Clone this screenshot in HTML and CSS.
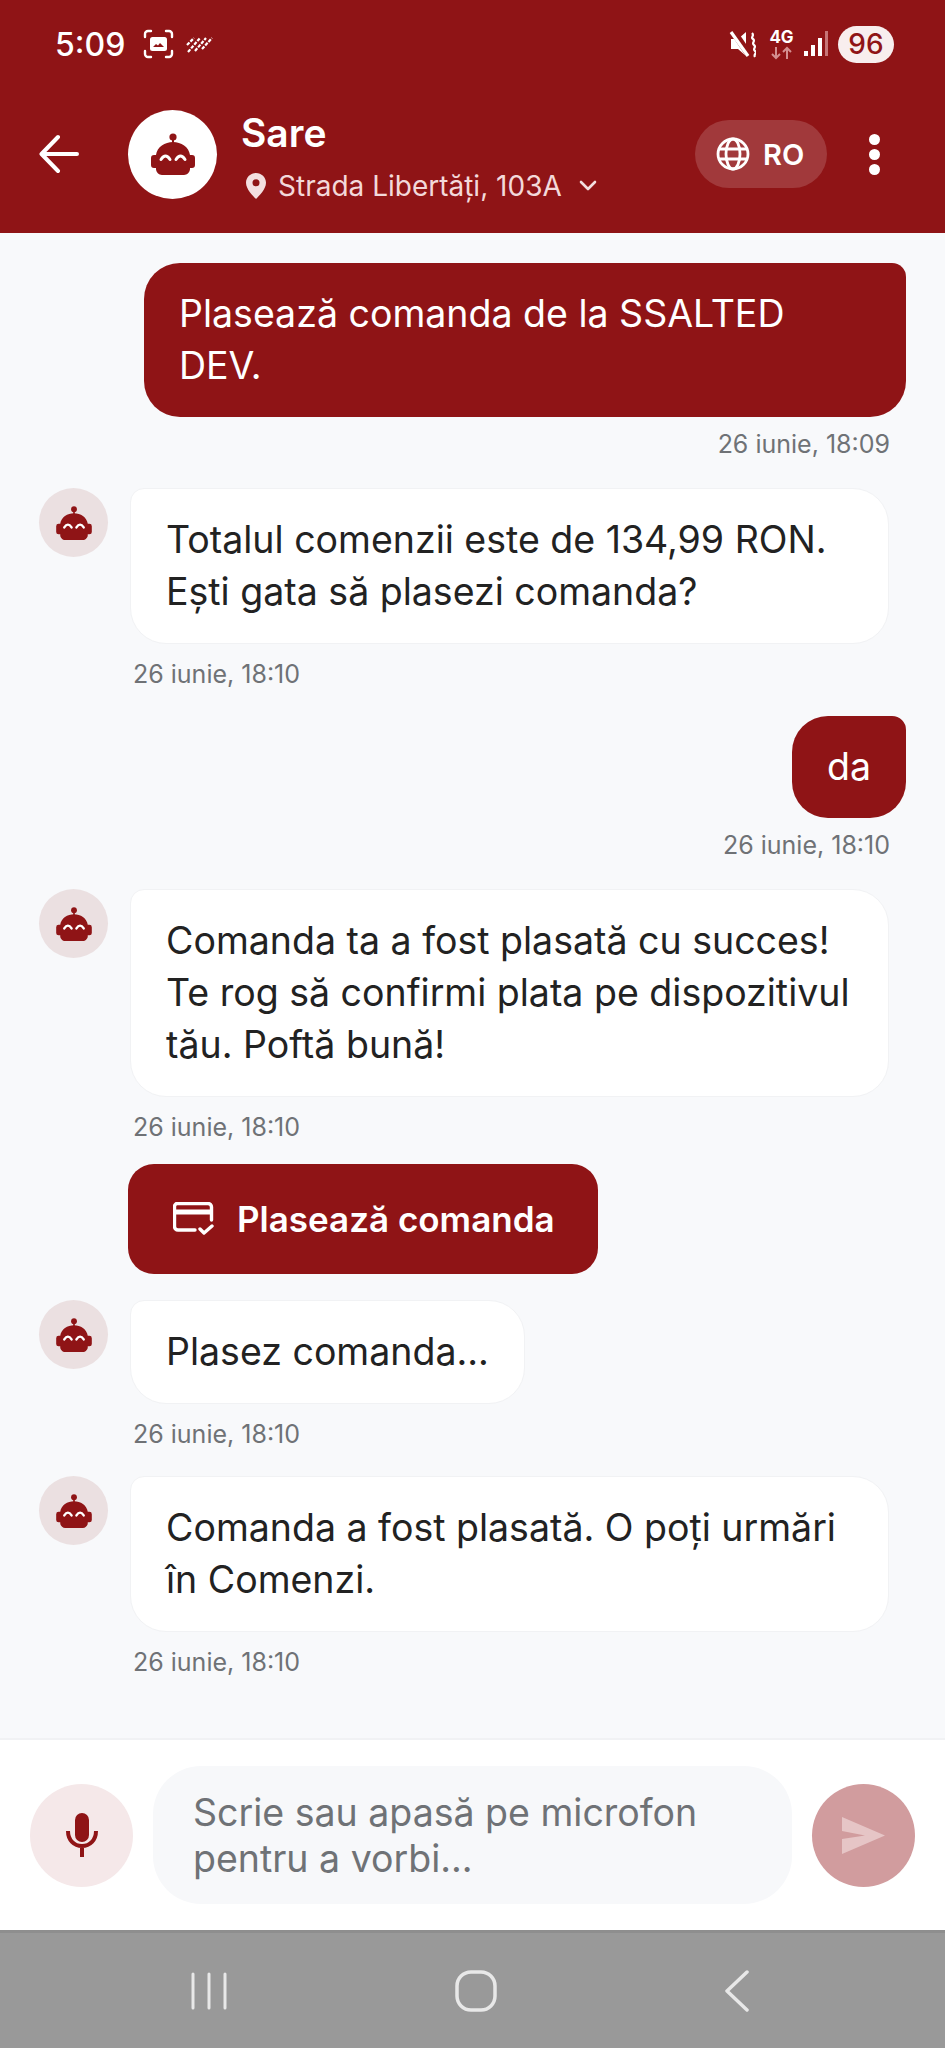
FILE: index.html
```html
<!DOCTYPE html>
<html lang="ro">
<head>
    <meta charset="UTF-8">
    <meta name="viewport" content="width=device-width, initial-scale=1.0">
    <title>Sare</title>
    <link rel="stylesheet" href="styles.css">
</head>
<body>
    <svg class="defs" width="0" height="0">
        <symbol id="robot" viewBox="0 0 44 42">
            <circle cx="22" cy="4" r="3.6" fill="currentColor"/>
            <rect x="21" y="5" width="2" height="7" fill="currentColor"/>
            <path fill="currentColor" d="M5 22C6 14 14 9 22 9s16 5 17 13h2a3 3 0 0 1 3 3v7a3 3 0 0 1-3 3h-2v1c0 3-3 6-6 6H11c-3 0-6-3-6-6v-1H3a3 3 0 0 1-3-3v-7a3 3 0 0 1 3-3z"/>
            <path fill="none" stroke="#fff" stroke-width="3" stroke-linecap="round" d="M10 26.500q4.500-7 9 0M25 26.500q4.500-7 9 0"/>
        </symbol>
    </svg>

    <header class="top">
        <div class="status">
            <span class="clock">5:09</span>
            <svg class="ic-shot" width="31" height="30" viewBox="0 0 31 30" fill="none" stroke="#fff" stroke-width="2.4" stroke-linecap="round">
                <path d="M2 8V5a3 3 0 0 1 3-3h3M23 2h3a3 3 0 0 1 3 3v3M29 22v3a3 3 0 0 1-3 3h-3M8 28H5a3 3 0 0 1-3-3v-3"/>
                <rect x="7" y="8" width="17" height="14" rx="2.500" fill="#fff" stroke="none"/>
                <path d="M10 18l3-3 2 1.500 2-2.500 4 4z" fill="#8f1416" stroke="none"/>
            </svg>
            <svg class="ic-stripes" width="27" height="17" viewBox="0 0 27 17" fill="none" stroke="#fff" stroke-width="2.200" stroke-dasharray="3.500 1.300">
                <path d="M1 9L8 2M2 16L14 2M9 15L20 2M16 13L26 2"/>
            </svg>
            <div class="status-right">
                <svg width="27" height="27" viewBox="0 0 27 27" fill="#fff">
                    <path d="M2 8h7l8-7v24l-8-7H2z"/>
                    <path d="M4 0l17 25" stroke="#8f1416" stroke-width="7"/>
                    <path d="M2 1l17 24" stroke="#fff" stroke-width="3.200"/>
                    <path d="M23 2c3 3-2 4 1 6s-2 4 1 6-2 4 1 6-2 3 0 6" fill="none" stroke="#fff" stroke-width="2.200"/>
                </svg>
                <div class="net">
                    <span class="net-label">4G</span>
                    <svg width="23" height="14" viewBox="0 0 23 14" fill="none" stroke="#d48f90" stroke-width="2">
                        <path d="M6 1v11M2 8l4 4 4-4M17 13V2M13 6l4-4 4 4"/>
                    </svg>
                </div>
                <svg width="24" height="26" viewBox="0 0 24 26" fill="#fff">
                    <rect x="0" y="20" width="4" height="5"/>
                    <rect x="7" y="14" width="4" height="11"/>
                    <rect x="14" y="7" width="4" height="18"/>
                    <rect x="21" y="0" width="3" height="25" fill="#c77577"/>
                </svg>
                <span class="battery">96</span>
            </div>
        </div>
        <div class="appbar">
            <svg class="back" width="40" height="40" viewBox="0 0 40 40" fill="none" stroke="#fff" stroke-width="4" stroke-linecap="round" stroke-linejoin="round">
                <path d="M38 20H3M19 3L2.500 20 19 37"/>
            </svg>
            <div class="logo"><svg class="robot" width="44" height="42"><use href="#robot"/></svg></div>
            <div class="who">
                <div class="name">Sare</div>
                <div class="place">
                    <svg width="20" height="26" viewBox="0 0 20 26"><path fill-rule="evenodd" fill="#f3dfe0" d="M10 0c5.500 0 10 4.300 10 9.700C20 16 13 23 10 26 7 23 0 16 0 9.700 0 4.300 4.500 0 10 0zm0 6.300a3.500 3.500 0 1 0 0 7 3.500 3.500 0 0 0 0-7z"/></svg>
                    <span>Strada Libertăţi, 103A</span>
                    <svg class="chev" width="18" height="11" viewBox="0 0 18 11" fill="none" stroke="#f3dfe0" stroke-width="2.600" stroke-linecap="round" stroke-linejoin="round"><path d="M2 2l7 7 7-7"/></svg>
                </div>
            </div>
            <div class="lang">
                <svg width="34" height="34" viewBox="0 0 34 34" fill="none" stroke="#fff" stroke-width="2.800">
                    <circle cx="17" cy="17" r="15"/>
                    <ellipse cx="17" cy="17" rx="7" ry="15"/>
                    <path d="M3 12h28M3 22h28"/>
                </svg>
                <span>RO</span>
            </div>
            <div class="dots"><i></i><i></i><i></i></div>
        </div>
    </header>

    <main class="chat">
        <div class="msg user">
            <div class="bubble wide">Plasează comanda de la SSALTED DEV.</div>
            <div class="time">26 iunie, 18:09</div>
        </div>
        <div class="msg bot">
            <div class="ava"><svg class="robot" width="36" height="34"><use href="#robot"/></svg></div>
            <div class="body">
                <div class="bubble">Totalul comenzii este de 134,99 RON. Ești gata să plasezi comanda?</div>
                <div class="time">26 iunie, 18:10</div>
            </div>
        </div>
        <div class="msg user">
            <div class="bubble">da</div>
            <div class="time">26 iunie, 18:10</div>
        </div>
        <div class="msg bot tight">
            <div class="ava"><svg class="robot" width="36" height="34"><use href="#robot"/></svg></div>
            <div class="body">
                <div class="bubble">Comanda ta a fost plasată cu succes! Te rog să confirmi plata pe dispozitivul tău. Poftă bună!</div>
                <div class="time">26 iunie, 18:10</div>
            </div>
        </div>
        <button class="place-order">
            <svg width="41" height="34" viewBox="0 0 41 34" fill="none" stroke="#fff" stroke-width="3.400" stroke-linecap="round" stroke-linejoin="round">
                <path d="M22 28H5a3.500 3.500 0 0 1-3.500-3.500v-20A3 3 0 0 1 5 1.500h30A3.500 3.500 0 0 1 38.500 5v13"/>
                <path d="M2 10h36" stroke-width="5" stroke-linecap="butt"/>
                <path d="M27 27l4 4 8-7"/>
            </svg>
            Plasează comanda
        </button>
        <div class="msg bot">
            <div class="ava"><svg class="robot" width="36" height="34"><use href="#robot"/></svg></div>
            <div class="body">
                <div class="bubble">Plasez comanda...</div>
                <div class="time">26 iunie, 18:10</div>
            </div>
        </div>
        <div class="msg bot">
            <div class="ava"><svg class="robot" width="36" height="34"><use href="#robot"/></svg></div>
            <div class="body">
                <div class="bubble">Comanda a fost plasată. O poți urmări în Comenzi.</div>
                <div class="time">26 iunie, 18:10</div>
            </div>
        </div>
    </main>

    <footer class="composer">
        <div class="round mic">
            <svg width="32" height="44" viewBox="0 0 32 44" fill="none" stroke="#8f1416" stroke-width="4">
                <rect x="9" y="0" width="14" height="29" rx="7" fill="#8f1416" stroke="none"/>
                <path d="M2 18c0 9 6 15 14 15s14-6 14-15M16 33v11"/>
            </svg>
        </div>
        <div class="field">Scrie sau apasă pe microfon pentru a vorbi...</div>
        <div class="round send">
            <svg width="43" height="37" viewBox="0 0 43 37" fill="#e6c5c6"><path d="M0 0l43 18.500L0 37V22l23-3.500L0 14z"/></svg>
        </div>
    </footer>

    <nav class="navbar">
        <svg width="36" height="38" viewBox="0 0 36 38" fill="none" stroke="#e8e8e8" stroke-width="3" stroke-linecap="round"><path d="M2 2v34M18 2v34M34 2v34"/></svg>
        <svg width="42" height="42" viewBox="0 0 42 42" fill="none" stroke="#e8e8e8" stroke-width="3.500"><rect x="2" y="2" width="38" height="38" rx="14"/></svg>
        <svg width="26" height="42" viewBox="0 0 26 42" fill="none" stroke="#e8e8e8" stroke-width="3.500" stroke-linecap="round" stroke-linejoin="round"><path d="M23 2L3 21l20 19"/></svg>
    </nav>
</body>
</html>
```

FILE: styles.css
```css
* {
    box-sizing: border-box;
}
body {
    font-family: Inter, "Liberation Sans", sans-serif;
    margin: 0;
    width: 945px;
    height: 100vh;
    display: flex;
    flex-direction: column;
    overflow: hidden;
    background-color: #f8f9fb;
    color: #222;
}
.defs {
    display: block;
    height: 0;
}
.top {
    background-color: #8f1416;
    color: white;
    height: 233px;
    flex-shrink: 0;
}
.status {
    height: 88px;
    display: flex;
    align-items: center;
    padding: 0 51px 0 55px;
}
.clock {
    font-size: 32px;
    font-weight: 500;
    width: 71px;
}
.ic-shot {
    margin-left: 17px;
}
.ic-stripes {
    margin-left: 12px;
}
.status-right {
    margin-left: auto;
    display: flex;
    align-items: center;
}
.net {
    margin-left: 14px;
    width: 23px;
    display: flex;
    flex-direction: column;
    align-items: center;
}
.net-label {
    font-size: 17px;
    font-weight: 700;
    line-height: 17px;
}
.net + svg {
    margin-left: 11px;
}
.battery {
    margin-left: 10px;
    width: 56px;
    height: 37px;
    border-radius: 19px;
    background-color: #f8eeee;
    color: #8f1416;
    font-size: 28px;
    font-weight: 500;
    display: flex;
    align-items: center;
    justify-content: center;
}
.appbar {
    height: 145px;
    display: flex;
    align-items: center;
    padding: 0 0 13px 39px;
}
.logo {
    width: 89px;
    height: 89px;
    margin-left: 49px;
    border-radius: 50%;
    background-color: white;
    display: flex;
    align-items: center;
    justify-content: center;
}
.robot {
    color: #8f1416;
}
.who {
    margin-left: 24px;
    width: 454px;
    margin-top: 4px;
}
.name {
    font-size: 39px;
    font-weight: 600;
    line-height: 44px;
}
.place {
    display: flex;
    align-items: center;
    margin: 15px 0 0 5px;
    font-size: 28px;
    line-height: 32px;
    color: #f3d9da;
}
.place span {
    margin-left: 12px;
}
.chev {
    margin-left: 17px;
}
.lang {
    width: 132px;
    height: 68px;
    border-radius: 34px;
    background-color: rgba(255,255,255,0.16);
    display: flex;
    align-items: center;
    padding-left: 21px;
    font-size: 29px;
    font-weight: 600;
}
.lang span {
    margin-left: 13px;
}
.dots {
    margin-left: 42px;
    display: flex;
    flex-direction: column;
    gap: 4px;
}
.dots i {
    display: block;
    width: 11px;
    height: 11px;
    border-radius: 50%;
    background-color: white;
}
.chat {
    flex: 1;
    padding: 30px 39px 0;
    min-height: 0;
}
.msg {
    margin-bottom: 29px;
}
.bubble {
    font-size: 37.500px;
    line-height: 52px;
    padding: 25px 35px;
    border-radius: 36px;
}
.time {
    font-size: 25px;
    line-height: 30px;
    margin-top: 12px;
    color: #6f7276;
}
.user {
    display: flex;
    flex-direction: column;
    align-items: flex-end;
}
.user .bubble {
    background-color: #8f1416;
    color: white;
    border-top-right-radius: 14px;
}
.user .bubble.wide {
    width: 762px;
    padding-right: 80px;
}
.user .time {
    margin-right: 16px;
}
.bot {
    display: flex;
    gap: 22px;
    padding-right: 17px;
    margin-bottom: 27px;
}
.bot.tight {
    margin-bottom: 22px;
}
.ava {
    width: 69px;
    height: 69px;
    border-radius: 50%;
    background-color: #ebe0e1;
    flex-shrink: 0;
    display: flex;
    align-items: center;
    justify-content: center;
}
.body {
    flex: 1;
    display: flex;
    flex-direction: column;
    align-items: flex-start;
}
.bot .bubble {
    background-color: white;
    border: 1px solid #f1f2f4;
    border-top-left-radius: 14px;
    color: #222;
}
.bot .time {
    margin: 15px 0 0 3px;
}
.place-order {
    display: flex;
    align-items: center;
    gap: 23px;
    width: 470px;
    height: 110px;
    margin: 0 0 26px 89px;
    padding: 0 0 0 45px;
    border: none;
    border-radius: 26px;
    background-color: #8f1416;
    color: white;
    font-family: inherit;
    font-size: 35px;
    font-weight: 600;
}
.composer {
    height: 192px;
    flex-shrink: 0;
    background-color: white;
    border-top: 2px solid #f1f2f4;
    display: flex;
    align-items: center;
    padding: 0 30px;
    gap: 20px;
}
.round {
    width: 103px;
    height: 103px;
    border-radius: 50%;
    flex-shrink: 0;
    display: flex;
    align-items: center;
    justify-content: center;
}
.mic {
    background-color: #f5e8e9;
}
.send {
    background-color: #d19c9e;
}
.field {
    flex: 1;
    height: 138px;
    border-radius: 48px;
    background-color: #f7f8fa;
    padding: 24px 40px;
    font-size: 37.500px;
    line-height: 46px;
    color: #6f7276;
}
.navbar {
    height: 118px;
    flex-shrink: 0;
    background-color: #999;
    border-top: 3px solid #8e8e8e;
    display: flex;
    align-items: center;
    padding: 0 195px 0 191px;
    justify-content: space-between;
}
```
